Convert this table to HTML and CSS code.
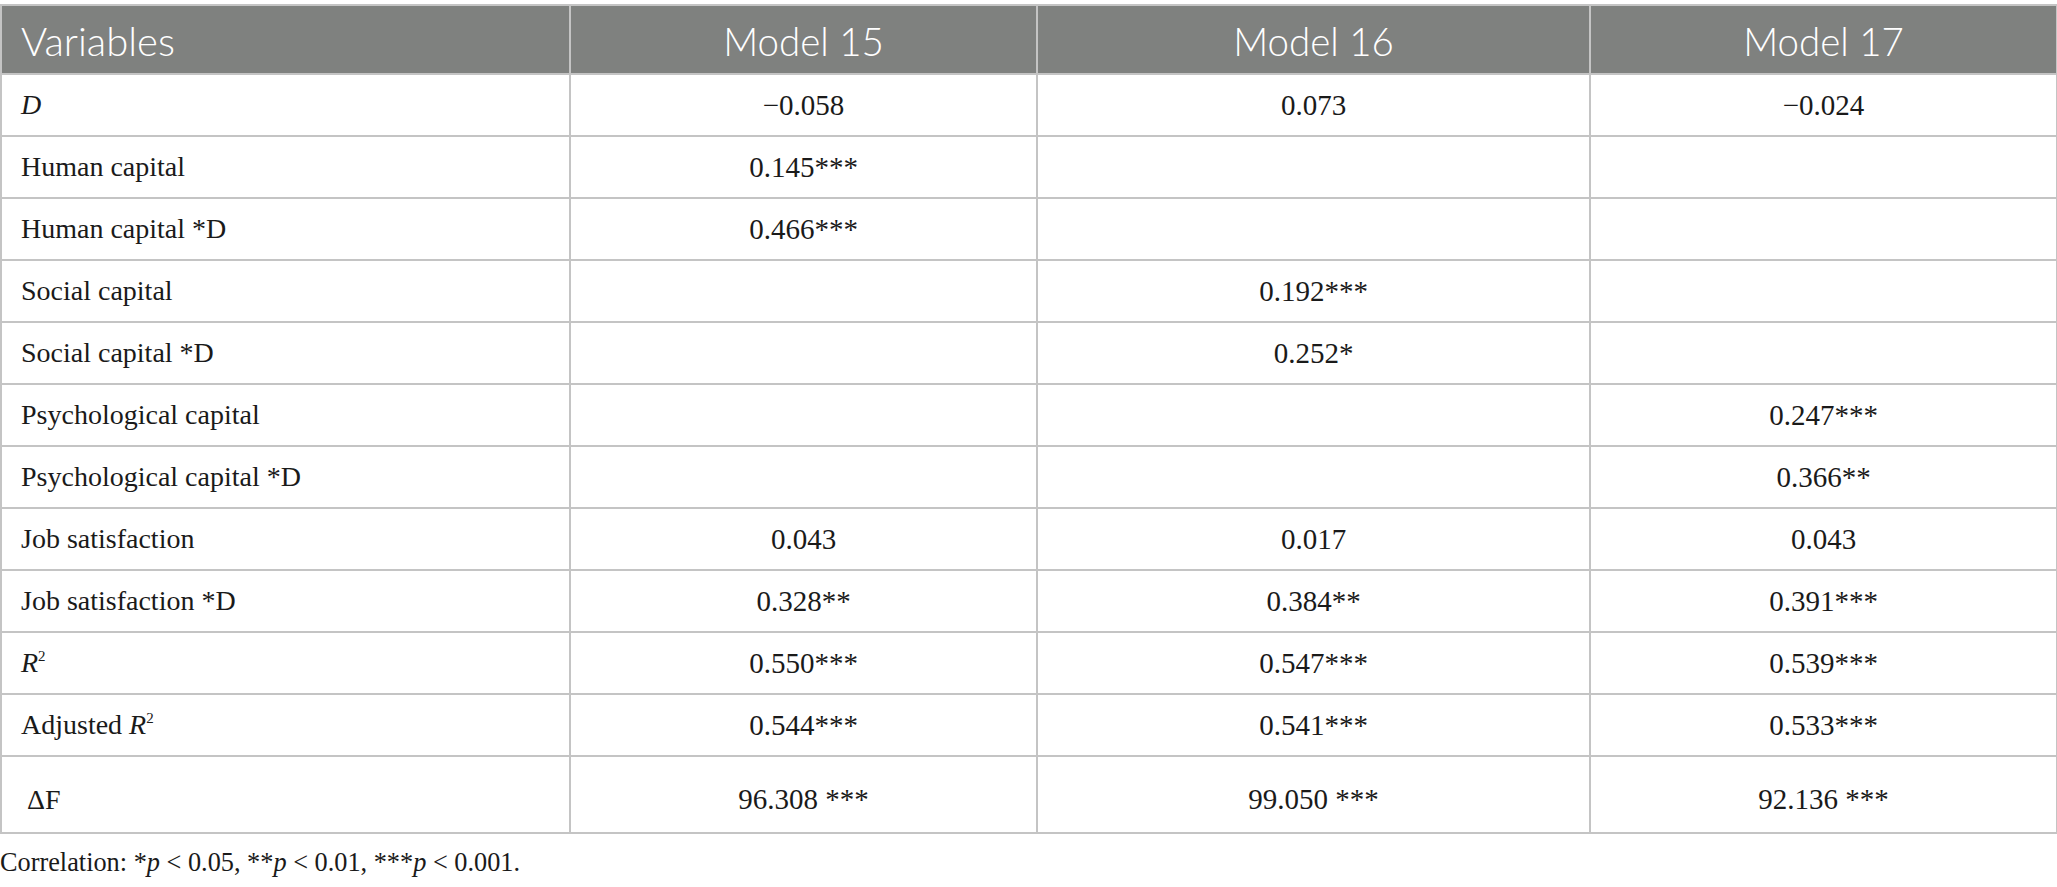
FILE: index.html
```html
<!DOCTYPE html>
<html>
<head>
<meta charset="utf-8">
<link rel="stylesheet" href="styles.css">
</head>
<body>
<div class="wrap">
<table class="tbl">
<colgroup>
<col class="c0"><col class="c1"><col class="c2"><col class="c3">
</colgroup>
<thead>
<tr class="hrow"><th class="lbl">Variables</th><th>Model 15</th><th>Model 16</th><th>Model 17</th></tr>
</thead>
<tbody>
<tr><td class="lbl"><i>D</i></td><td>−0.058</td><td>0.073</td><td>−0.024</td></tr>
<tr><td class="lbl">Human capital</td><td>0.145***</td><td></td><td></td></tr>
<tr><td class="lbl">Human capital *D</td><td>0.466***</td><td></td><td></td></tr>
<tr><td class="lbl">Social capital</td><td></td><td>0.192***</td><td></td></tr>
<tr><td class="lbl">Social capital *D</td><td></td><td>0.252*</td><td></td></tr>
<tr><td class="lbl">Psychological capital</td><td></td><td></td><td>0.247***</td></tr>
<tr><td class="lbl">Psychological capital *D</td><td></td><td></td><td>0.366**</td></tr>
<tr><td class="lbl">Job satisfaction</td><td>0.043</td><td>0.017</td><td>0.043</td></tr>
<tr><td class="lbl">Job satisfaction *D</td><td>0.328**</td><td>0.384**</td><td>0.391***</td></tr>
<tr><td class="lbl"><i>R</i><sup>2</sup></td><td>0.550***</td><td>0.547***</td><td>0.539***</td></tr>
<tr><td class="lbl">Adjusted <i>R</i><sup>2</sup></td><td>0.544***</td><td>0.541***</td><td>0.533***</td></tr>
<tr class="last"><td class="lbl"><span class="ind">ΔF</span></td><td>96.308 ***</td><td>99.050 ***</td><td>92.136 ***</td></tr>
</tbody>
</table>
<p class="note">Correlation: *<i>p</i> &lt; 0.05, **<i>p</i> &lt; 0.01, ***<i>p</i> &lt; 0.001.</p>
</div>
</body>
</html>
```

FILE: styles.css
```css
html, body {
  margin: 0;
  padding: 0;
  background: #ffffff;
}
.wrap {
  padding-top: 4px;
}
.tbl {
  border-collapse: collapse;
  width: 2056px;
  table-layout: fixed;
  font-family: "Liberation Serif", "Times New Roman", serif;
  font-size: 29px;
  color: #1a1a1a;
}
.c0 { width: 569px; }
.c1 { width: 467px; }
.c2 { width: 553px; }
.c3 { width: 467px; }
.tbl th, .tbl td {
  border: 2px solid #c4c4c4;
  text-align: center;
  vertical-align: middle;
  padding: 0 20px;
  height: 62px;
  box-sizing: border-box;
}
.tbl th {
  background: #7f817f;
  color: #ffffff;
  font-family: "Lato", "Roboto", sans-serif;
  font-weight: 300;
  font-size: 38.5px;
  height: 69px;
  padding-top: 2px;
}
.tbl .lbl {
  text-align: left;
}
.tbl td.lbl {
  padding-left: 19px;
  font-size: 28px;
}
.tbl th.lbl {
  padding-left: 19px;
  font-size: 40px;
}
.tbl sup {
  font-size: 15px;
  vertical-align: 11px;
  line-height: 0;
}
.tbl .last td {
  height: 77px;
  padding-top: 10px;
}
.ind {
  padding-left: 6px;
}
.note {
  margin: 14px 0 0 0;
  font-family: "Liberation Serif", "Times New Roman", serif;
  font-size: 26.3px;
  color: #1a1a1a;
}
```
